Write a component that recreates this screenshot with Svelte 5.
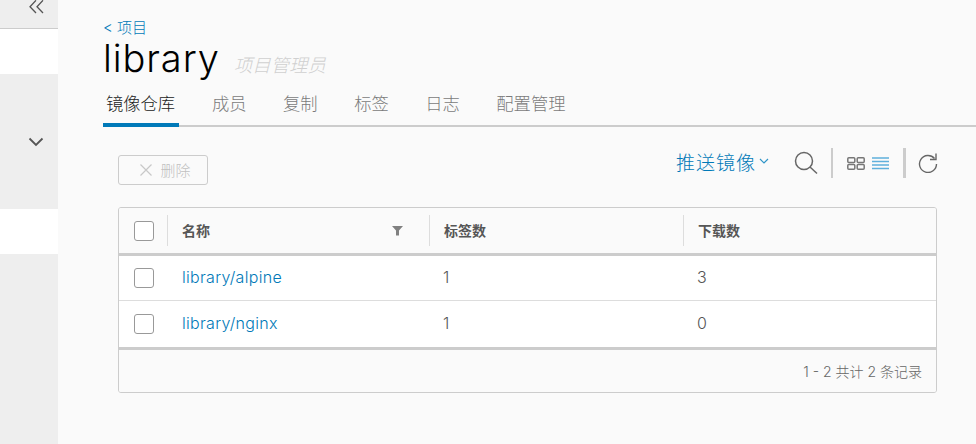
<script>
    const tabs = ["镜像仓库", "成员", "复制", "标签", "日志", "配置管理"];
    const rows = [
        { name: "library/alpine", tags: 1, pulls: 3 },
        { name: "library/nginx", tags: 1, pulls: 0 }
    ];
</script>

<div class="page">
    <nav class="sidebar">
        <div class="collapse">
            <svg width="16" height="14" viewBox="0 0 16 14" aria-hidden="true">
                <path d="M8 0.300 2 6.700l6 6.300M15 0.300 9 6.700l6 6.300" fill="none" stroke="#555" stroke-width="1.300" />
            </svg>
        </div>
        <div class="nav-item"></div>
        <div class="nav-group">
            <svg width="16" height="10" viewBox="0 0 16 10" aria-hidden="true">
                <path d="M1.500 1.500 8 8l6.500-6.500" fill="none" stroke="#555" stroke-width="1.800" />
            </svg>
        </div>
        <div class="nav-item"></div>
    </nav>

    <main class="content">
        <a class="back" href="#projects">&lt; 项目</a>
        <div class="title-row">
            <h1>library</h1>
            <span class="role">项目管理员</span>
        </div>

        <ul class="tabs">
            {#each tabs as tab, i}
                <li class:active={i === 0}>{tab}</li>
            {/each}
        </ul>

        <section class="repos">
            <div class="toolbar">
                <button class="delete" type="button" disabled>
                    <svg width="14" height="14" viewBox="0 0 14 14" aria-hidden="true">
                        <path d="M1.500 1.500l11 11M12.500 1.500l-11 11" stroke="#c8c8c8" stroke-width="1.200" />
                    </svg>
                    <span>删除</span>
                </button>
                <div class="actions">
                    <span class="push">推送镜像
                        <svg width="10" height="6" viewBox="0 0 10 6" aria-hidden="true">
                            <path d="M1 1l4 4 4-4" fill="none" stroke="#2f95c8" stroke-width="1.200" />
                        </svg>
                    </span>
                    <svg class="search" width="24" height="24" viewBox="0 0 24 24" aria-hidden="true">
                        <circle cx="10" cy="10" r="8.500" fill="none" stroke="#666" stroke-width="1.500" />
                        <path d="M16 16l7 6.500" stroke="#666" stroke-width="1.500" />
                    </svg>
                    <span class="divider"></span>
                    <svg class="grid" width="18" height="13" viewBox="0 0 18 13" aria-hidden="true">
                        <g fill="none" stroke="#777" stroke-width="1.500">
                            <rect x="0.800" y="0.800" width="7" height="4.600" rx="1" />
                            <rect x="10.200" y="0.800" width="7" height="4.600" rx="1" />
                            <rect x="0.800" y="7.600" width="7" height="4.600" rx="1" />
                            <rect x="10.200" y="7.600" width="7" height="4.600" rx="1" />
                        </g>
                    </svg>
                    <svg class="list" width="17" height="13" viewBox="0 0 17 13" aria-hidden="true">
                        <path d="M0 1h17M0 4.500h17M0 8h17M0 11.500h17" stroke="#5fb0dc" stroke-width="1.300" />
                    </svg>
                    <span class="divider second"></span>
                    <svg class="refresh" width="20" height="20" viewBox="0 0 20 20" aria-hidden="true">
                        <path d="M16.500 5.500A8.500 8.500 0 1 0 18.500 11" fill="none" stroke="#666" stroke-width="1.400" />
                        <path d="M18 0.500v6h-6" fill="none" stroke="#666" stroke-width="1.400" />
                    </svg>
                </div>
            </div>

            <div class="grid-table">
                <div class="head row">
                    <div class="cell check"><span class="box"></span></div>
                    <div class="cell name">
                        <span>名称</span>
                        <svg width="11" height="11" viewBox="0 0 11 11" aria-hidden="true">
                            <path d="M0 1h11L7 5.500V10.500H4V5.500z" fill="#808080" />
                        </svg>
                    </div>
                    <div class="cell tags"><span>标签数</span></div>
                    <div class="cell pulls"><span>下载数</span></div>
                </div>
                {#each rows as row}
                    <div class="body row">
                        <div class="cell check"><span class="box"></span></div>
                        <div class="cell name"><a href="#repo">{row.name}</a></div>
                        <div class="cell tags">{row.tags}</div>
                        <div class="cell pulls">{row.pulls}</div>
                    </div>
                {/each}
                <div class="foot">1 - 2 共计 2 条记录</div>
            </div>
        </section>
    </main>
</div>

<style>
    :global(body) {
        margin: 0;
        background: #fafafa;
    }

    .page {
        display: flex;
        width: 976px;
        height: 444px;
        overflow: hidden;
        font-family: "Inter", "Noto Sans CJK SC", sans-serif;
        font-weight: 300;
        color: #565656;
    }

    .sidebar {
        width: 58px;
        flex: none;
        background: #eeeeee;
        display: flex;
        flex-direction: column;
    }

    .collapse {
        height: 28px;
        border-bottom: 1px solid #cccccc;
        display: flex;
        justify-content: flex-end;
        align-items: flex-start;
        padding-right: 14px;
    }

    .nav-item {
        height: 45px;
        background: #ffffff;
        flex: none;
    }

    .nav-group {
        height: 135px;
        flex: none;
        display: flex;
        justify-content: flex-end;
        padding-right: 14px;
        padding-top: 63px;
        box-sizing: border-box;
    }

    .content {
        flex: 1;
        min-width: 0;
        padding: 19px 0 0 45px;
    }

    .back {
        display: block;
        font-size: 15px;
        line-height: 18px;
        color: #0079b8;
        text-decoration: none;
    }

    .title-row {
        display: flex;
        align-items: flex-start;
        gap: 14px;
        height: 45px;
        margin-top: -1px;
    }

    h1 {
        margin: 0;
        font-size: 38px;
        font-weight: 300;
        line-height: 44px;
        color: #000000;
        letter-spacing: 0.9px;
    }

    .role {
        font-size: 18.400px;
        line-height: 22px;
        margin-top: 18px;
        font-style: italic;
        color: #d0d0d0;
    }

    .tabs {
        list-style: none;
        display: flex;
        gap: 36.500px;
        margin: 8px 0 0;
        padding: 0;
        height: 38px;
        box-sizing: border-box;
        border-bottom: 2px solid #cccccc;
    }

    .tabs li {
        height: 36px;
        font-size: 17.300px;
        line-height: 30px;
        color: #7a7a7a;
        box-sizing: border-box;
    }

    .tabs li.active {
        color: #222222;
        padding: 0 3px;
        width: 76px;
        margin-right: -3.500px;
        border-bottom: 4px solid #0079b8;
        height: 38px;
    }

    .repos {
        padding: 0 39px 0 15px;
    }

    .toolbar {
        display: flex;
        justify-content: space-between;
        align-items: flex-start;
        padding-top: 21px;
        height: 80px;
        box-sizing: border-box;
    }

    .delete {
        width: 90px;
        height: 30px;
        margin-top: 7px;
        padding: 0 0 0 4px;
        display: flex;
        align-items: center;
        justify-content: center;
        gap: 7px;
        font: inherit;
        font-size: 15px;
        color: #c0c0c0;
        background: transparent;
        border: 1px solid #cccccc;
        border-radius: 3px;
    }

    .delete span {
        margin-top: -2px;
    }

    .actions {
        display: flex;
        align-items: center;
        height: 30px;
        margin-right: -1px;
    }

    .push {
        font-size: 19px;
        color: #0079b8;
        letter-spacing: 1px;
        display: flex;
        align-items: center;
        gap: 3px;
        margin-top: -4px;
    }

    .search {
        margin-left: 25px;
    }

    .divider {
        width: 2px;
        height: 30px;
        background: #cccccc;
        margin-left: 13px;
    }

    .grid {
        margin-left: 14px;
    }

    .list {
        margin-left: 7px;
    }

    .divider.second {
        width: 3px;
        margin-left: 14px;
    }

    .refresh {
        margin-left: 12px;
        margin-right: 0;
    }

    .grid-table {
        border: 1px solid #cccccc;
        border-radius: 3px;
        background: #ffffff;
        width: 819px;
        height: 186px;
        box-sizing: border-box;
        overflow: hidden;
        display: flex;
        flex-direction: column;
    }

    .row {
        display: grid;
        grid-template-columns: 48px 262px 254px 1fr;
    }

    .head {
        height: 48px;
        background: #fafafa;
        border-bottom: 3px solid #cccccc;
        box-sizing: border-box;
        font-size: 14px;
        font-weight: 700;
        padding-top: 7px;
    }

    .head .cell {
        height: 31px;
        border-left: 1px solid #dddddd;
    }

    .head .cell span:not(.box) {
        margin-top: -2px;
    }

    .head .check {
        border-left: 0;
    }

    .body {
        height: 45px;
        border-bottom: 1px solid #dddddd;
        box-sizing: border-box;
        font-size: 16px;
        color: #565656;
    }

    .body + .body {
        height: 46px;
        border-bottom: 0;
    }

    .cell {
        display: flex;
        align-items: center;
        padding-left: 14px;
        box-sizing: border-box;
    }

    .check {
        padding-left: 15px;
    }

    .head .name {
        justify-content: space-between;
        padding-right: 26px;
    }

    .box {
        width: 20px;
        height: 20px;
        box-sizing: border-box;
        border: 1px solid #999999;
        border-radius: 3px;
        background: #ffffff;
    }

    .body .name {
        padding-left: 15px;
    }

    .body .cell:not(.check) {
        padding-bottom: 2px;
    }

    .body a {
        color: #0079b8;
        text-decoration: none;
        letter-spacing: 0.3px;
    }

    .foot {
        flex: 1;
        background: #fafafa;
        border-top: 3px solid #cccccc;
        padding-right: 14px;
        display: flex;
        justify-content: flex-end;
        align-items: center;
        font-size: 14px;
        color: #666666;
    }
</style>
